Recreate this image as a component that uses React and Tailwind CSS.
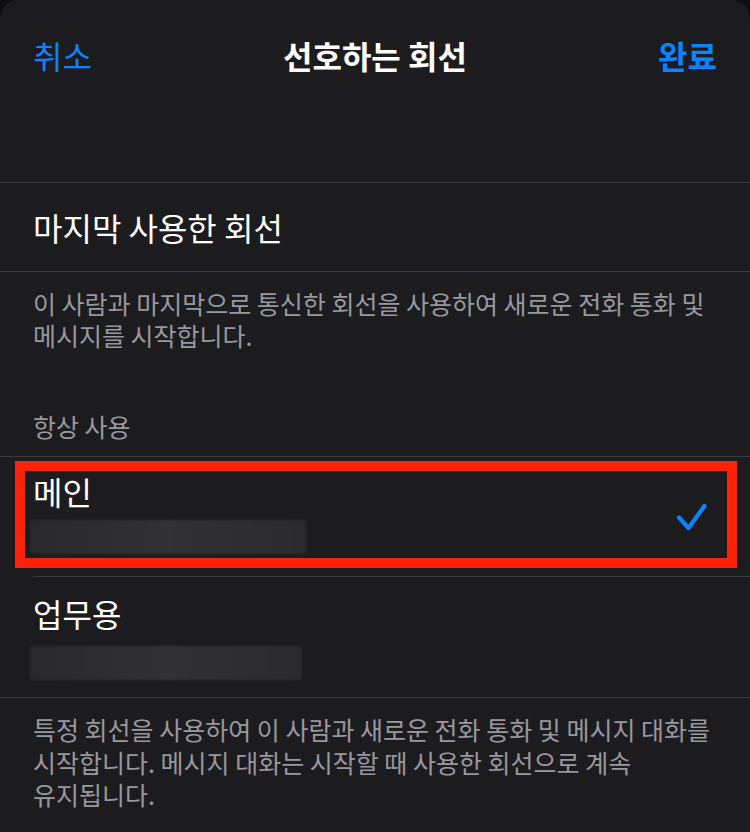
import React from "react";

const font = { fontFamily: '"Noto Sans CJK KR", "Noto Sans", sans-serif' };

function Sep({ inset }) {
  return <div className={`h-px bg-[#3a3a3c] ${inset ? "ml-[33px]" : ""}`} />;
}

function Blur({ w }) {
  return (
    <div
      className="h-[34px] rounded-[2px] bg-gradient-to-r from-[#29292b] via-[#323234] to-[#2b2b2d] blur-[1px]"
      style={{ width: w }}
    />
  );
}

export default function App() {
  return (
    <div className="w-[750px] h-[832px] bg-[#0e0e0f] overflow-hidden" style={font}>
      <div className="h-full rounded-t-[18px] bg-[#1c1c1e] text-white">
        {/* Nav */}
        <div className="h-[182px] pt-[36px]">
          <div className="relative flex items-center justify-between h-[38px] px-[33px]">
            <span className="text-[32px] leading-[38px] text-[#0a84ff]">취소</span>
            <span className="absolute left-1/2 -translate-x-1/2 text-[32px] leading-[38px] font-semibold">
              선호하는 회선
            </span>
            <span className="text-[32px] leading-[38px] font-semibold text-[#0a84ff]">완료</span>
          </div>
        </div>
        <Sep />
        <div className="h-[88px] flex items-center px-[33px]">
          <span className="text-[32px] leading-[36px]">마지막 사용한 회선</span>
        </div>
        <Sep />
        <div className="pt-[15px] px-[33px] text-[25px] leading-[32px] text-[#98989f] whitespace-nowrap">
          이 사람과 마지막으로 통신한 회선을 사용하여 새로운 전화 통화 및
          <br />
          메시지를 시작합니다.
        </div>
        <div className="pt-[59px] pb-[14px] px-[33px] text-[25px] leading-[32px] text-[#98989f]">
          항상 사용
        </div>
        <Sep />
        {/* Selected row */}
        <div className="relative h-[119px] flex items-center justify-between pl-[30px] pr-[42px]">
          <div className="flex flex-col">
            <span className="pl-[3px] pt-[16px] text-[32px] leading-[36px]">메인</span>
            <div className="mt-[11px] mb-[23px]">
              <Blur w={276} />
            </div>
          </div>
          <svg width="32" height="30" viewBox="0 0 32 30" className="mt-[2px]">
            <path
              d="M3 14.5 L12.5 25 L28.5 3"
              fill="none"
              stroke="#0a84ff"
              strokeWidth="4.2"
              strokeLinecap="round"
              strokeLinejoin="round"
            />
          </svg>
          <div className="absolute top-[4px] bottom-[8px] left-[15px] right-[13px] border-[10px] border-[#ff2208] pointer-events-none" />
        </div>
        <Sep inset />
        <div className="h-[120px] flex flex-col pl-[30px]">
          <span className="pl-[3px] pt-[18px] text-[32px] leading-[36px]">업무용</span>
          <div className="mt-[15px]">
            <Blur w={272} />
          </div>
        </div>
        <Sep />
        <div className="pt-[15px] px-[33px] text-[25px] leading-[32.5px] text-[#98989f] whitespace-nowrap">
          특정 회선을 사용하여 이 사람과 새로운 전화 통화 및 메시지 대화를
          <br />
          시작합니다. 메시지 대화는 시작할 때 사용한 회선으로 계속
          <br />
          유지됩니다.
        </div>
      </div>
    </div>
  );
}
